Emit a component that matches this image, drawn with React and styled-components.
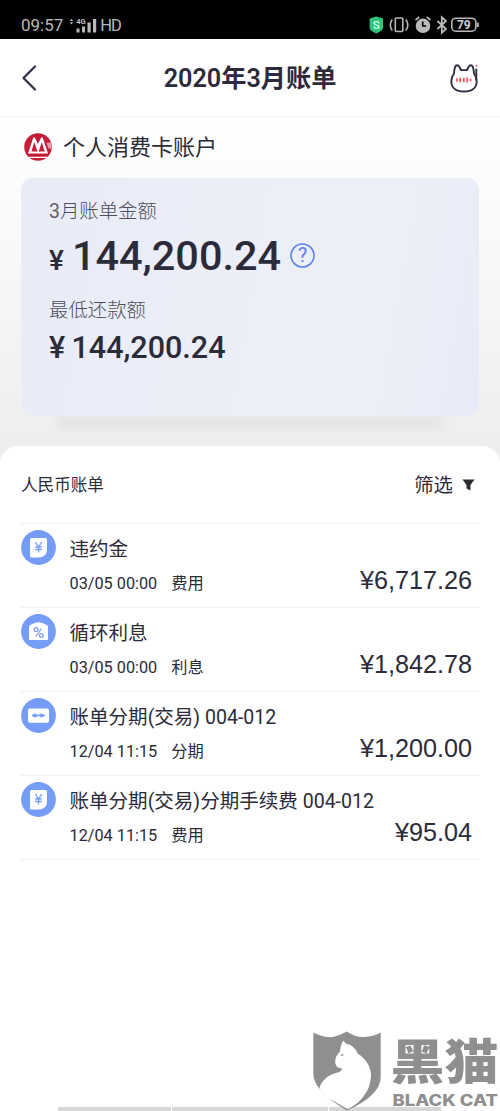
import React from "react";
import styled, { createGlobalStyle } from "styled-components";

const Global = createGlobalStyle`
  * { box-sizing: border-box; }
  html, body { margin: 0; padding: 0; background: #fff; }
  body { font-family: Roboto, "Noto Sans CJK SC", sans-serif; color: #2b2b3a; overflow: hidden; }
  svg { display: block; flex: none; }
`;

const Page = styled.div`
  position: relative;
  display: flex;
  flex-direction: column;
  width: 500px;
  height: 1111px;
  background: #fff;
  overflow: hidden;
`;

const StatusBar = styled.div`
  display: flex;
  justify-content: space-between;
  height: 39px;
  padding: 12px 20px 0 21px;
  background: #000;
  color: #b9b9b9;
`;

const StatusGroup = styled.div`
  display: flex;
  align-items: center;
  height: 26px;
  font-size: 17px;
  line-height: 26px;
`;

const Network = styled.span`
  display: flex;
  align-items: center;
  gap: 2px;
  margin-left: 6px;
  padding-top: 1px;
  font-size: 16.5px;
  letter-spacing: -1.2px;
`;

const NavBar = styled.header`
  display: grid;
  grid-template-columns: 44px 1fr 44px;
  align-items: center;
  height: 78px;
  padding: 0 21px;
  border-bottom: 1px solid #f3f3f3;
`;

const Title = styled.h1`
  margin: 0;
  padding-top: 3px;
  font-size: 25.2px;
  line-height: 36px;
  font-weight: 600;
  text-align: center;
  white-space: nowrap;
`;

const NavEnd = styled.div`
  display: flex;
  justify-content: flex-end;
`;

const Summary = styled.section`
  height: 347px;
  margin-bottom: -18px;
  padding: 14px 21px 0;
  background: linear-gradient(#fff, #fafafa 30%, #eeeeee 95%);
`;

const Account = styled.div`
  display: flex;
  align-items: center;
  gap: 11px;
  height: 32px;
  margin-bottom: 15px;
  padding-left: 3px;
  font-size: 22px;
  line-height: 32px;
  span { padding-top: 2px; }
`;

const Card = styled.div`
  position: relative;
  height: 238px;
  padding: 19px 28px;
  border-radius: 12px;
  background: linear-gradient(100deg, #e9ebf6, #eceef8 50%, #edeff8 80%, #e9eaf7);
  &::after {
    content: "";
    position: absolute;
    left: 36px;
    right: 36px;
    top: 238px;
    height: 16px;
    background: linear-gradient(#e0e0e0, #ebebeb);
    filter: blur(4px);
    clip-path: inset(0 -14px -14px -14px);
  }
`;

const CardLabel = styled.div`
  height: 30px;
  font-size: 19.4px;
  line-height: 30px;
  font-weight: 300;
  color: #4d4d5c;
`;

const Digit = styled.span`
  font-weight: 400;
  color: #5d5d6b;
`;

const Amount = styled.div`
  display: flex;
  align-items: baseline;
  height: ${(p) => p.$height}px;
  margin-bottom: ${(p) => p.$after || 0}px;
  font-size: ${(p) => p.$size}px;
  line-height: ${(p) => p.$height}px;
  font-weight: 500;
`;

const Yen = styled.span`
  width: ${(p) => p.$width}px;
  font-size: ${(p) => p.$size}px;
`;

const Help = styled.span`
  align-self: center;
  margin: -2px 0 0 9.4px;
`;

const Sheet = styled.main`
  position: relative;
  flex: 1;
  padding: 0 21px;
  border-radius: 18px 18px 0 0;
  background: #fff;
`;

const SheetHead = styled.div`
  display: flex;
  align-items: center;
  justify-content: space-between;
  height: 77px;
  padding-bottom: 2px;
  font-size: 16.6px;
`;

const Filter = styled.div`
  display: flex;
  align-items: center;
  gap: 9px;
  padding-right: 4px;
  font-size: 19.4px;
  svg { margin-top: 2px; }
`;

const Row = styled.div`
  display: flex;
  height: 84px;
  padding: 6px 7px 0 0;
  border-top: 1px solid #f0f0f0;
  &:last-child { height: 85px; border-bottom: 1px solid #f0f0f0; }
`;

const RowText = styled.div`
  flex: 1;
  margin-left: 13.5px;
`;

const RowTitle = styled.div`
  margin-top: 4px;
  height: 32px;
  font-size: 19.55px;
  line-height: 32px;
  white-space: nowrap;
`;

const RowMeta = styled.div`
  display: flex;
  gap: 14px;
  height: 30px;
  margin-top: 3px;
  font-size: 16.25px;
  line-height: 30px;
`;

const RowBottom = styled.div`
  display: flex;
  justify-content: space-between;
`;

const RowAmount = styled.div`
  margin-top: -3px;
  font-family: "Liberation Sans", Arial, sans-serif;
  font-size: 25.2px;
  line-height: 34px;
`;

const NavStrip = styled.div`
  position: absolute;
  left: 58px;
  bottom: 0;
  display: flex;
  gap: 1px;
`;

const Segment = styled.i`
  width: ${(p) => p.$w}px;
  height: 4px;
  background: #d6d6d6;
`;

const Watermark = styled.div`
  position: absolute;
  right: 0;
  bottom: 0;
  svg { overflow: visible; }
`;

const Signal = () => (
  <svg width="29" height="18" viewBox="0 0 29 18" fill="#b9b9b9">
    <path d="M.8 4 2.500 1.700 4.200 4zM.8 5.200h3.400L2.500 7.500z" />
    <text x="7.200" y="7" fontSize="7.500" fontWeight="700" letterSpacing="0">4G</text>
    <rect x="7.500" y="11.500" width="3" height="4" />
    <rect x="13" y="9.500" width="3" height="6" />
    <rect x="18.500" y="5.500" width="3.200" height="10" />
    <rect x="24" y="2" width="3.200" height="13.500" />
  </svg>
);

const StatusIcons = () => (
  <svg width="111" height="20" viewBox="0 0 111 20" fill="none" stroke="#b9b9b9" strokeWidth="1.600">
    <path d="M7.300 1.500 14 3.500v9.500q0 2.500-6.700 5.500Q.6 15.500.6 13V3.500z" fill="#2fc47c" stroke="none" />
    <text x="7.300" y="14" textAnchor="middle" fontSize="11.500" fontWeight="500" fill="#d6ffe9" stroke="none">S</text>
    <rect x="26.300" y="3" width="7.500" height="13.500" rx="1" />
    <path d="M23.300 4.500q-4 5.500 0 11M36.800 4.500q4 5.500 0 11" />
    <circle cx="54" cy="10.800" r="7.300" fill="#b9b9b9" stroke="none" />
    <path d="M53.700 6.500V11h3.500" stroke="#000" />
    <path d="M46.500 5 50.300 2M57.700 2l3.800 3" />
    <path d="m68.500 6 8.500 8-4.200 3.700V2.300l4.200 3.700-8.500 8" strokeWidth="1.800" />
    <rect x="82.800" y="3.200" width="24" height="13" rx="4" />
    <path d="M108.800 7.500v4.500" strokeWidth="2" />
    <text x="94.800" y="14" textAnchor="middle" fontSize="12" fontWeight="700" fill="#d0d0d0" stroke="none">79</text>
  </svg>
);

const CatIcon = () => (
  <svg width="30" height="30" viewBox="0 0 30 30" fill="none" stroke="#2c2e43" strokeWidth="1.900" strokeLinecap="round" strokeLinejoin="round">
    <path d="M5 10.500Q5.300 2.300 8.200 2.200q2 0 3.800 4.900h6q1.800-4.900 3.800-4.900 2.800.1 3.200 8.300 2.700 3.500 2.700 8c0 6.500-5 10-12.700 10S2.300 25 2.300 18.500q0-4.500 2.700-8z" />
    <path d="M27.300 6.500v10" />
    <path d="M27.500 2.700v.1" stroke="#ee5c5c" />
    <path d="M8 15.500v3M11.200 14.800v4.500M14.800 14.800v4.500M18.300 14.500v5M21.500 16v2" stroke="#ee4d50" strokeWidth="1.700" strokeLinecap="butt" />
  </svg>
);

const BankLogo = () => (
  <svg width="28" height="28" viewBox="0 0 28 28">
    <circle cx="14" cy="14" r="13.800" fill="#c51d38" />
    <path d="M22.500 9.500h4.300q1 3 .7 6h-3.200z" fill="#e79aa6" />
    <path d="M4 20.500 9.300 4.500h1.500l3.200 6.500 3.200-6.500h1.500L24 20.500z" fill="#fff" />
    <path d="m7.500 18.500 2.700-9.500 3.300 9.500zM14.700 18.500l3.100-9.500 2.900 9.500z" fill="#c51d38" />
    <path d="M4.500 23.700h19l-1 1.200h-17z" fill="#fff" />
  </svg>
);

const HelpIcon = () => (
  <svg width="25" height="25" viewBox="0 0 25 25">
    <circle cx="12.500" cy="12.500" r="11.500" fill="none" stroke="#5c80ec" strokeWidth="1.600" />
    <text x="12.500" y="19.300" textAnchor="middle" fontSize="19.500" fontWeight="450" fill="#5c80ec">?</text>
  </svg>
);

const RowIcon = ({ kind }) => (
  <svg width="35" height="35" viewBox="0 0 35 35">
    <circle cx="17.500" cy="17.500" r="17.400" fill="#759df8" />
    {kind === "fee" && (
      <>
        <path d="M10.500 8H24.500q1.500 0 1.500 1.500v9.500q0 8.500-8.500 8.500h-7q-1.500 0-1.500-1.500V9.500Q9 8 10.500 8z" fill="#fff" />
        <path d="m14.300 12 3.200 5 3.200-5M14.200 17h6.600M14.200 19.500h6.600M17.500 17v5.500" fill="none" stroke="#759df8" strokeWidth="1.300" />
      </>
    )}
    {kind === "interest" && (
      <>
        <path d="M8 12.500q0-1 1-1.300L13.500 9q4-1.500 8 0l4.500 2.200q1 .3 1 1.300V25q0 1-1 1H9q-1 0-1-1z" fill="#fff" />
        <text x="17.500" y="23.500" textAnchor="middle" fontSize="15.500" fontWeight="500" fill="#759df8">%</text>
      </>
    )}
    {kind === "installment" && (
      <>
        <rect x="7" y="10.500" width="21" height="14.200" rx="1.800" fill="#fff" />
        <path d="M11 17.500h13" stroke="#759df8" strokeWidth="1.600" />
        <circle cx="14" cy="17.500" r="2" fill="#759df8" />
        <circle cx="20.500" cy="17.500" r="2" fill="#759df8" />
      </>
    )}
  </svg>
);

const BlackCat = () => (
  <svg width="190" height="82" viewBox="0 0 190 82" fill="#8f8f8f">
    <path d="M3.300 3.700Q18 10 25 7.500q7-2 11.700-5Q45 8 53 8t17.700-4.300V48Q71 66 37 81.500 3 62 3.300 44z" />
    <path d="M33.300 11.500 36.500 15q4 0 6 2.500 4 3 5 7C55 29 61 37 61 46q0 12-8 22-6 8-15.500 12L19 69.500q-7-5-9.500-10 .5-4 3.500-7.500 5-6 13-8 6-1.500 6-4.500-5.500-.5-6.500-4.500Q24.500 32 26 28q2-3.500 4-5.500.5-7 3.300-11z" fill="#fff" />
    <path d="m30.500 26 2.700-1.300.3 1.600-1.800.8z" />
    <text x="80.500" y="50" fontFamily="'Noto Sans CJK SC'" fontWeight="900" fontSize="48" textLength="108" lengthAdjust="spacingAndGlyphs">黑猫</text>
    <text x="82.500" y="77" fontFamily="Inter, Roboto, sans-serif" fontWeight="800" fontSize="15.500" textLength="105.500" lengthAdjust="spacingAndGlyphs">BLACK CAT</text>
  </svg>
);

const rows = [
  { kind: "fee", title: "违约金", time: "03/05 00:00", type: "费用", amount: "¥6,717.26" },
  { kind: "interest", title: "循环利息", time: "03/05 00:00", type: "利息", amount: "¥1,842.78" },
  { kind: "installment", title: "账单分期(交易) 004-012", time: "12/04 11:15", type: "分期", amount: "¥1,200.00" },
  { kind: "fee", title: "账单分期(交易)分期手续费 004-012", time: "12/04 11:15", type: "费用", amount: "¥95.04" },
];

export default function App() {
  return (
    <Page>
      <Global />
      <StatusBar>
        <StatusGroup>
          <span>09:57</span>
          <Network>
            <Signal />
            <span>HD</span>
          </Network>
        </StatusGroup>
        <StatusGroup>
          <StatusIcons />
        </StatusGroup>
      </StatusBar>
      <NavBar>
        <svg width="18" height="28" viewBox="0 0 18 28" fill="none" stroke="#2c2e43" strokeWidth="2.200" strokeLinecap="round" strokeLinejoin="round">
          <path d="M14 2.500 2.500 14 14 25.500" />
        </svg>
        <Title>2020年3月账单</Title>
        <NavEnd><CatIcon /></NavEnd>
      </NavBar>
      <Summary>
        <Account><BankLogo /><span>个人消费卡账户</span></Account>
        <Card>
          <CardLabel><Digit>3</Digit>月账单金额</CardLabel>
          <Amount $size={41.4} $height={58} $after={11}>
            <Yen $size={28} $width={23}>¥</Yen>
            <span>144,200.24</span>
            <Help><HelpIcon /></Help>
          </Amount>
          <CardLabel>最低还款额</CardLabel>
          <Amount $size={30.5} $height={44}>
            <Yen $size={30.5} $width={22.5}>¥</Yen>
            <span>144,200.24</span>
          </Amount>
        </Card>
      </Summary>
      <Sheet>
        <SheetHead>
          <span>人民币账单</span>
          <Filter>
            <span>筛选</span>
            <svg width="13" height="12" viewBox="0 0 13 12" fill="#2b2b33"><path d="M.5.5h12L8.500 6v5.500l-4-2V6z" /></svg>
          </Filter>
        </SheetHead>
        <div>
          {rows.map((r, i) => (
            <Row key={i}>
              <RowIcon kind={r.kind} />
              <RowText>
                <RowTitle>{r.title}</RowTitle>
                <RowBottom>
                  <RowMeta><span>{r.time}</span><span>{r.type}</span></RowMeta>
                  <RowAmount>{r.amount}</RowAmount>
                </RowBottom>
              </RowText>
            </Row>
          ))}
        </div>
      </Sheet>
      <NavStrip><Segment $w={113} /><Segment $w={156} /><Segment $w={112} /></NavStrip>
      <Watermark><BlackCat /></Watermark>
    </Page>
  );
}
